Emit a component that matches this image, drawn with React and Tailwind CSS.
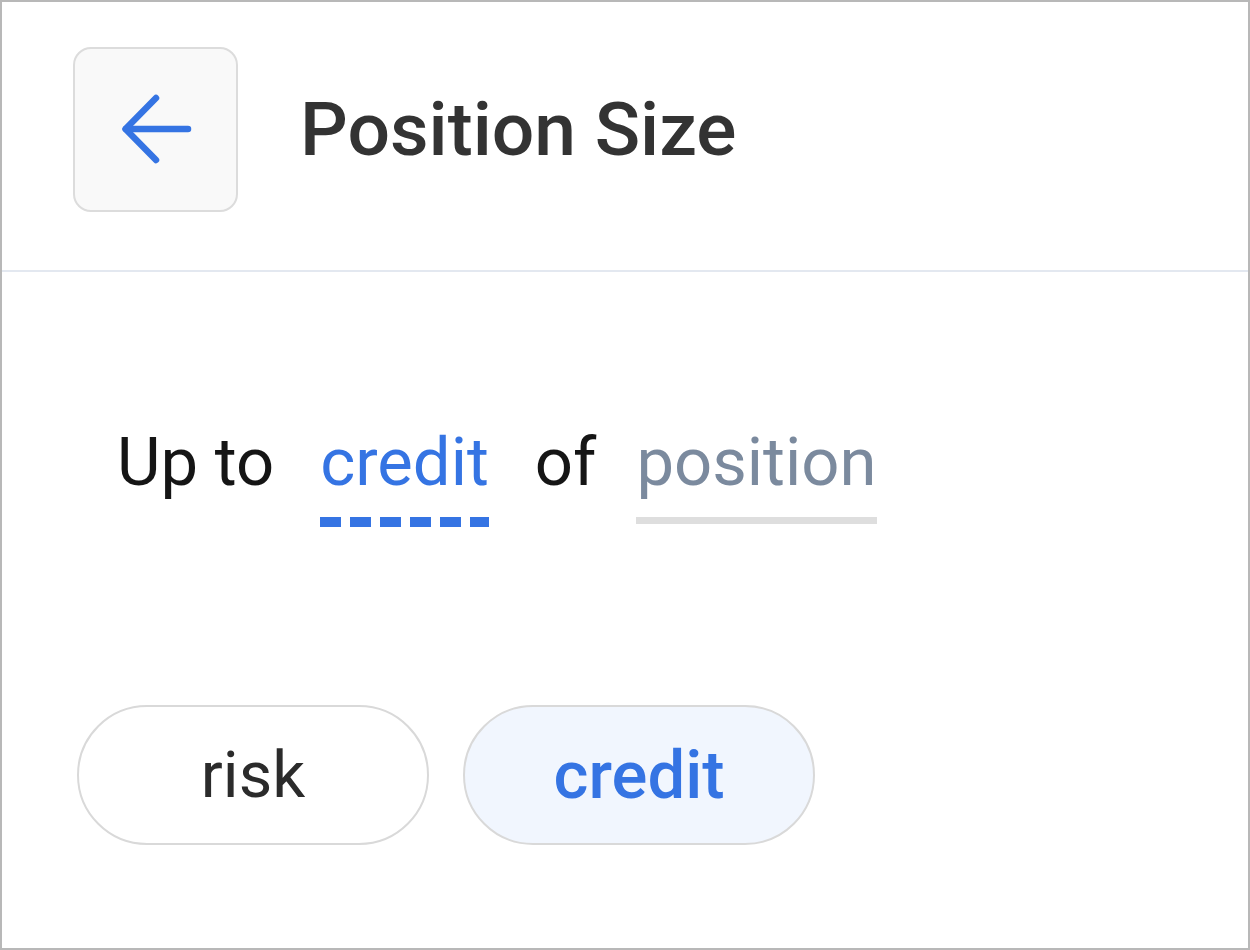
import React from 'react';

const BackArrow = () => (
  <svg width="80" height="80" viewBox="0 0 80 80" fill="none" stroke="#3574e3" strokeWidth="6.5" strokeLinecap="round" strokeLinejoin="round">
    <path d="M72 39H10" />
    <path d="M40 8 9.5 39 40 70" />
  </svg>
);

const Chip = ({ label, active }) => (
  <button
    className={`w-[352px] h-[140px] rounded-full border-2 border-[#d9d9d9] flex items-center justify-center leading-none ${
      active ? 'bg-[#f1f6fe] text-[#3574e3] font-medium text-[67px]' : 'bg-white text-[#2b2b2b] text-[65px]'
    }`}
  >
    {label}
  </button>
);

const App = () => {
  return (
    <div className="w-[1250px] h-[950px] border-2 border-[#b8b8b8] bg-white font-['Roboto',sans-serif] overflow-hidden">
      {/* Header */}
      <header className="h-[270px] flex items-start pt-[45px] pl-[71px] border-b-2 border-[#e3e8f0]">
        <div className="flex items-center gap-[62px]">
          <button className="w-[165px] h-[165px] rounded-[18px] border-2 border-[#dcdcdc] bg-[#f9f9f9] flex items-center justify-center">
            <BackArrow />
          </button>
          <h1 className="text-[75px] leading-none font-medium text-[#333333]">Position Size</h1>
        </div>
      </header>

      {/* Body */}
      <main className="pl-[75px]">
        <div className="mt-[157px] pl-[40px] flex items-start text-[67px] leading-none">
          <span className="text-[#151515]">Up to</span>
          <span className="ml-[46px] flex flex-col">
            <span className="text-[#3574e3]">credit</span>
            <span className="mt-[21px] h-[10px] bg-[repeating-linear-gradient(90deg,#3574e3_0px,#3574e3_21px,transparent_21px,transparent_30px)]" />
          </span>
          <span className="ml-[46px] text-[#151515]">of</span>
          <span className="ml-[40px] flex flex-col">
            <span className="text-[#7b8a9e]">position</span>
            <span className="mt-[21px] h-[7px] bg-[#dedede]" />
          </span>
        </div>

        <div className="mt-[178px] flex gap-[34px]">
          <Chip label="risk" />
          <Chip label="credit" active />
        </div>
      </main>
    </div>
  );
};

export default App;
